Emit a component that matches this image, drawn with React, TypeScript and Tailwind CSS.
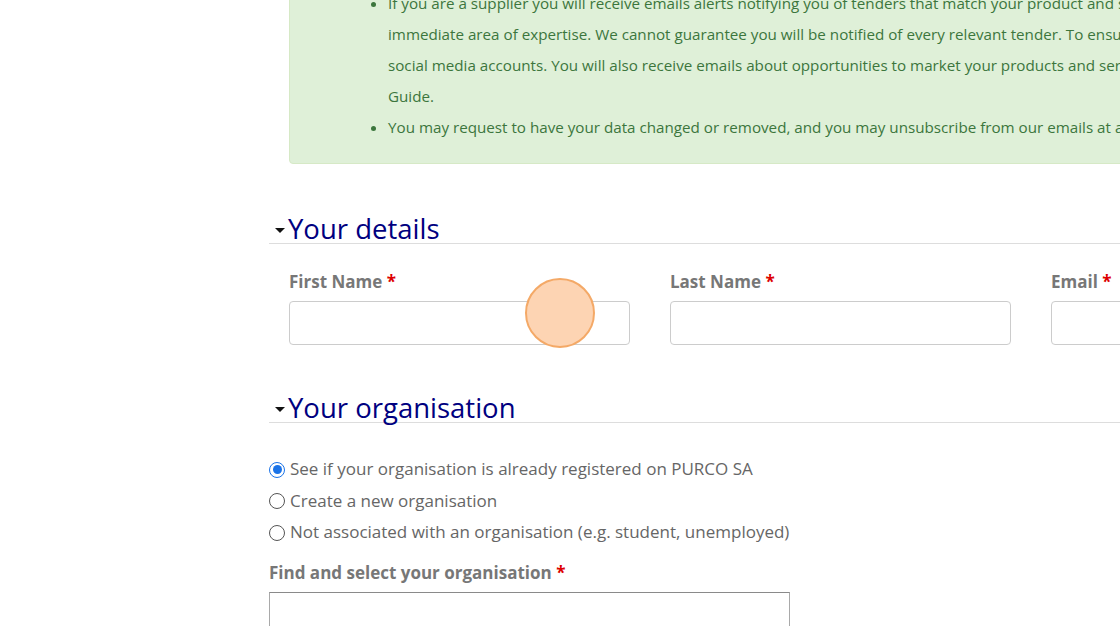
import React from "react";

const font = { fontFamily: '"Open Sans", "Liberation Sans", sans-serif' };

function Caret() {
  return (
    <svg width="10" height="5" viewBox="0 0 10 5" className="mt-[5px] ml-[1px] mr-[3px] shrink-0">
      <polygon points="0,0 10,0 5,5" fill="#111" />
    </svg>
  );
}

function Heading({ children }: { children: React.ReactNode }) {
  return (
    <div className="flex items-center border-b border-[#dddddd] pl-[5px]">
      <Caret />
      <h2 className="text-[27.5px] leading-[28px] pt-[2px] text-[#000080] font-normal">{children}</h2>
    </div>
  );
}

function Label({ children, className = "" }: { children: React.ReactNode; className?: string }) {
  return (
    <div className={"text-[17px] leading-[24px] font-bold text-[#777777] mb-[7px] whitespace-nowrap " + className}>
      {children} <span className="text-[#dd0000]">*</span>
    </div>
  );
}

function Radio({ checked, label }: { checked?: boolean; label: string }) {
  return (
    <div className="flex items-center h-[31.5px] whitespace-nowrap">
      {checked ? (
        <span className="w-[16px] h-[16px] rounded-full border-[1.5px] border-[#1a73e8] bg-white flex items-center justify-center mr-[5px] mt-[2px]">
          <span className="w-[9px] h-[9px] rounded-full bg-[#1a73e8]" />
        </span>
      ) : (
        <span className="w-[16px] h-[16px] rounded-full border border-[#555] bg-white mr-[5px] mt-[2px]" />
      )}
      <span className="text-[17px] text-[#666666]">{label}</span>
    </div>
  );
}

export default function App() {
  return (
    <div className="relative w-[1120px] h-[626px] overflow-hidden bg-white" style={font}>
      <div className="pl-[269px] w-[1500px]">
        {/* green notice box */}
        <div className="ml-[20px] -mt-[28px] pt-[15px] pb-[20px] bg-[#dff0d8] border border-[#d6e9c6] rounded-[4px] text-[#3c763d] text-[15.2px] leading-[31px]">
          <ul className="list-disc pl-[98px] whitespace-nowrap">
            <li>
              If you are a supplier you will receive emails alerts notifying you of tenders that match your product and service categories within your
              <br />
              immediate area of expertise. We cannot guarantee you will be notified of every relevant tender. To ensure you do not miss out, follow our
              <br />
              social media accounts. You will also receive emails about opportunities to market your products and services in the Supplier
              <br />
              Guide.
            </li>
            <li>You may request to have your data changed or removed, and you may unsubscribe from our emails at any time.</li>
          </ul>
        </div>

        {/* Your details */}
        <div className="mt-[49px]">
          <Heading>Your details</Heading>
          <div className="flex gap-[40px] pl-[20px] mt-[26px]">
            <div className="w-[341px]">
              <Label>First Name</Label>
              <div className="h-[44px] border border-[#cccccc] rounded-[4px] bg-white" />
            </div>
            <div className="w-[341px]">
              <Label>Last Name</Label>
              <div className="h-[44px] border border-[#cccccc] rounded-[4px] bg-white" />
            </div>
            <div className="w-[341px]">
              <Label>Email</Label>
              <div className="h-[44px] border border-[#cccccc] rounded-[4px] bg-white" />
            </div>
          </div>
        </div>

        {/* Your organisation */}
        <div className="mt-[47px]">
          <Heading>Your organisation</Heading>
          <div className="mt-[30px]">
            <Radio checked label="See if your organisation is already registered on PURCO SA" />
            <Radio label="Create a new organisation" />
            <Radio label="Not associated with an organisation (e.g. student, unemployed)" />
          </div>
          <div className="mt-[13px]">
            <Label>Find and select your organisation</Label>
            <div className="w-[521px] h-[44px] border border-[#a9a9a9] border-t-[#8a8a8a] bg-white" />
          </div>
        </div>
      </div>

      {/* click indicator */}
      <div className="absolute left-[525px] top-[278px] w-[70px] h-[70px] rounded-full bg-[#fdd4b3] border-[2.5px] border-[#f4a967]" />
    </div>
  );
}
